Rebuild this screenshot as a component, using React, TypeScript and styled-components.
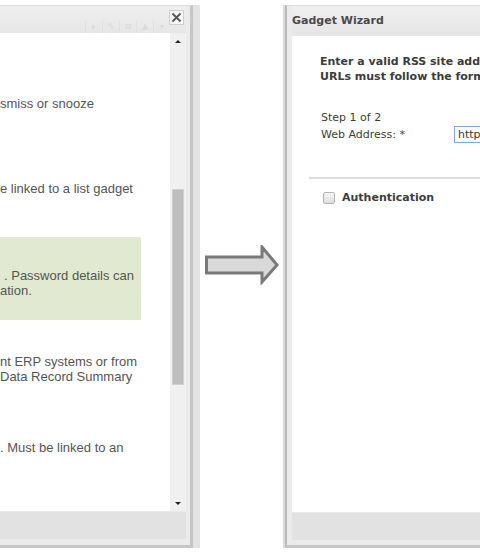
import styled, { createGlobalStyle } from "styled-components";

const GlobalStyle = createGlobalStyle`
  html, body {
    margin: 0;
    padding: 0;
    background: #ffffff;
  }
`;

const Page = styled.div`
  width: 480px;
  height: 555px;
  display: flex;
  overflow: hidden;
  background: #ffffff;
`;

const LeftShot = styled.div`
  width: 200px;
  flex-shrink: 0;
  padding-top: 5px;
  box-sizing: border-box;
`;

const Frame = styled.div<{ $side: "left" | "right" }>`
  display: flex;
  flex-direction: column;
  height: 543px;
  box-sizing: border-box;
  background: #ebebeb;
  border-top: 1px solid #dcdcdc;
  border-bottom: 3px solid #c6c6c6;
  ${({ $side }) =>
    $side === "left"
      ? `
    border-right: 3px solid #c6c6c6;
    margin-right: 7px;
    box-shadow: 7px 0 0 #e3e3e3;
    padding-right: 4px;
    padding-bottom: 6px;
  `
      : `
    border-left: 2px solid #bcbcbc;
    margin-left: 2px;
    box-shadow: -2px 0 0 #dadada;
    padding-left: 5px;
    padding-bottom: 5px;
  `}
`;

const TitleBar = styled.div<{ $height: number }>`
  position: relative;
  height: ${({ $height }) => $height}px;
  flex-shrink: 0;
  display: flex;
  align-items: center;
  background: linear-gradient(#efefef, #e6e6e6);
  font-family: "DejaVu Sans", Verdana, sans-serif;
  font-weight: bold;
  font-size: 11px;
  color: #4a4a4a;
`;

const GhostTools = styled.div`
  display: flex;
  margin-left: 85px;
  margin-top: 14px;
  height: 12px;
`;

const GhostTool = styled.span`
  width: 16px;
  height: 12px;
  border-left: 1px solid #e0e0e0;
  color: #dadada;
  font-size: 8px;
  line-height: 12px;
  text-align: center;
  font-family: "DejaVu Sans", sans-serif;
`;

const CloseButton = styled.div`
  position: absolute;
  left: 169px;
  top: 4px;
  width: 15px;
  height: 15px;
  box-sizing: border-box;
  border: 1px solid #cfcfcf;
  background: #f6f6f6;
  display: flex;
  align-items: center;
  justify-content: center;
`;

const Body = styled.div`
  flex: 1;
  display: flex;
  background: #ffffff;
  min-height: 0;
`;

const Content = styled.div`
  flex: 1;
  padding-top: 63px;
  font-family: "Liberation Sans", Arial, sans-serif;
  font-size: 13px;
  line-height: 15px;
  color: #555555;
  white-space: nowrap;
`;

const Para = styled.p<{ $gap: number; $indent?: number }>`
  margin: ${({ $gap }) => $gap}px 0 0 ${({ $indent }) => $indent ?? 0}px;
`;

const NoteBox = styled.div<{ $gap: number }>`
  margin-top: ${({ $gap }) => $gap}px;
  width: 141px;
  height: 83px;
  box-sizing: border-box;
  padding-top: 31px;
  background: #e1ead0;
`;

const Scrollbar = styled.div`
  width: 16px;
  flex-shrink: 0;
  background: #f0f0f0;
  display: flex;
  flex-direction: column;
  align-items: center;
`;

const ScrollArrow = styled.div<{ $up: boolean }>`
  height: 16px;
  display: flex;
  align-items: center;
  justify-content: center;
  &::after {
    content: "";
    border-left: 3px solid transparent;
    border-right: 3px solid transparent;
    ${({ $up }) => ($up ? "border-bottom" : "border-top")}: 3px solid #222;
  }
`;

const ScrollGap = styled.div<{ $h: number }>`
  height: ${({ $h }) => $h}px;
  flex-shrink: 0;
`;

const Thumb = styled.div`
  width: 12px;
  height: 196px;
  box-sizing: border-box;
  background: #bdbdbd;
  border: 1px solid #d0d0d0;
`;

const Footer = styled.div`
  height: 27px;
  flex-shrink: 0;
  background: #e2e2e2;
  border-top: 1px solid #eaeaea;
`;

const ArrowSlot = styled.div`
  width: 83px;
  flex-shrink: 0;
  padding-top: 245px;
  box-sizing: border-box;
`;

const RightShot = styled.div`
  flex: 1;
  padding-top: 5px;
  min-width: 0;
`;

const WizardTitle = styled.span`
  padding-top: 1px;
  padding-bottom: 2px;
`;

const WizardBody = styled.div`
  flex: 1;
  background: #ffffff;
  padding-top: 18px;
  font-family: "DejaVu Sans", Verdana, sans-serif;
  font-size: 11px;
  color: #3c3c3c;
  white-space: nowrap;
  overflow: hidden;
`;

const Intro = styled.div`
  padding-left: 28px;
  font-weight: bold;
  line-height: 15px;
`;

const Step = styled.div`
  padding-left: 29px;
  margin-top: 26px;
  line-height: 16px;
`;

const FieldRow = styled.div`
  display: flex;
  align-items: center;
  height: 17px;
`;

const FieldLabel = styled.span`
  width: 133px;
  flex-shrink: 0;
`;

const Input = styled.div`
  height: 17px;
  width: 60px;
  box-sizing: border-box;
  border: 1px solid #7ea6dc;
  border-right: none;
  padding-left: 3px;
  line-height: 15px;
  color: #4d3322;
`;

const Divider = styled.hr`
  margin: 34px 0 0 17px;
  border: none;
  border-top: 2px solid #dcdde3;
`;

const CheckRow = styled.label`
  display: flex;
  align-items: center;
  gap: 7px;
  margin: 12px 0 0 31px;
  font-weight: bold;
  font-size: 11px;
`;

const CheckBox = styled.span`
  width: 12px;
  height: 12px;
  box-sizing: border-box;
  border: 1px solid #b5b5b5;
  border-radius: 2px;
  background: linear-gradient(#f4f4f4, #dedede);
`;

export default function App() {
  return (
    <>
      <GlobalStyle />
      <Page>
        <LeftShot>
          <Frame $side="left">
            <TitleBar $height={27}>
              <GhostTools>
                <GhostTool>▸</GhostTool>
                <GhostTool>✎</GhostTool>
                <GhostTool>⊟</GhostTool>
                <GhostTool>▲</GhostTool>
                <GhostTool>▾</GhostTool>
              </GhostTools>
              <CloseButton>
                <svg width="11" height="11" viewBox="0 0 11 11">
                  <path
                    d="M1.5 1.5 L9.5 9.5 M9.5 1.5 L1.5 9.5"
                    stroke="#555"
                    strokeWidth="1.8"
                  />
                </svg>
              </CloseButton>
            </TitleBar>
            <Body>
              <Content>
                <Para $gap={0}>smiss or snooze</Para>
                <Para $gap={70}>e linked to a list gadget</Para>
                <NoteBox $gap={41}>
                  <Para $gap={0} $indent={4}>
                    . Password details can
                  </Para>
                  <Para $gap={0}>ation.</Para>
                </NoteBox>
                <Para $gap={34}>nt ERP systems or from</Para>
                <Para $gap={0}>Data Record Summary</Para>
                <Para $gap={56}>. Must be linked to an</Para>
              </Content>
              <Scrollbar>
                <ScrollArrow $up />
                <ScrollGap $h={140} />
                <Thumb />
                <ScrollGap $h={110} />
                <ScrollArrow $up={false} />
              </Scrollbar>
            </Body>
            <Footer />
          </Frame>
        </LeftShot>
        <ArrowSlot>
          <svg width="80" height="40" viewBox="0 0 80 40">
            <polygon
              points="6.5,12 62,12 62,2 77,20 62,37 62,28 6.5,28"
              fill="#d9d9d9"
              stroke="#7a7a7a"
              strokeWidth="3"
            />
          </svg>
        </ArrowSlot>
        <RightShot>
          <Frame $side="right">
            <TitleBar $height={30}>
              <WizardTitle>Gadget Wizard</WizardTitle>
            </TitleBar>
            <WizardBody>
              <Intro>
                <div>Enter a valid RSS site address</div>
                <div>URLs must follow the format</div>
              </Intro>
              <Step>
                <div>Step 1 of 2</div>
                <FieldRow>
                  <FieldLabel>Web Address: *</FieldLabel>
                  <Input>http://</Input>
                </FieldRow>
              </Step>
              <Divider />
              <CheckRow>
                <CheckBox />
                Authentication
              </CheckRow>
            </WizardBody>
            <Footer />
          </Frame>
        </RightShot>
      </Page>
    </>
  );
}
